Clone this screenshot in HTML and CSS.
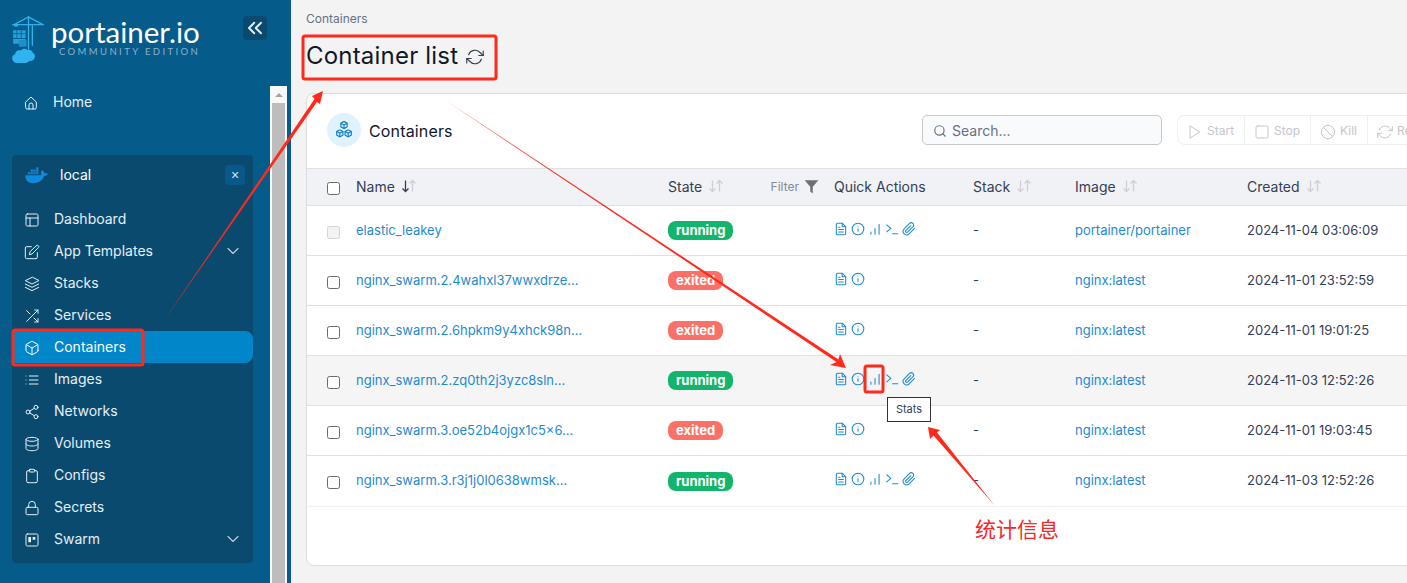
FILE: index.html
```html
<!DOCTYPE html>
<html lang="en">
<head>
  <meta charset="UTF-8" />
  <meta name="viewport" content="width=device-width, initial-scale=1.0"/>
  <title>Container list</title>
  <link rel="stylesheet" href="styles.css">
</head>
<body>

  <svg class="defs" width="0" height="0">
    <symbol id="i-home" viewBox="0 0 24 24"><path d="M4 10.500 12 3l8 7.500V19a2 2 0 0 1-2 2H6a2 2 0 0 1-2-2z"/><path d="M9 21v-6a3 3 0 0 1 6 0v6"/></symbol>
    <symbol id="i-layout" viewBox="0 0 24 24"><rect x="3" y="3" width="18" height="18" rx="2"/><path d="M3 9h18M9 21V9"/></symbol>
    <symbol id="i-edit" viewBox="0 0 24 24"><path d="M11 4H4a2 2 0 0 0-2 2v14a2 2 0 0 0 2 2h14a2 2 0 0 0 2-2v-7"/><path d="M18.500 2.500a2.121 2.121 0 0 1 3 3L12 15l-4 1 1-4z"/></symbol>
    <symbol id="i-layers" viewBox="0 0 24 24"><path d="M12 2 2 7l10 5 10-5z"/><path d="m2 17 10 5 10-5M2 12l10 5 10-5"/></symbol>
    <symbol id="i-shuffle" viewBox="0 0 24 24"><path d="M16 3h5v5M4 20 21 3M21 16v5h-5M15 15l6 6M4 4l5 5"/></symbol>
    <symbol id="i-box" viewBox="0 0 24 24"><path d="M21 16V8a2 2 0 0 0-1-1.730l-7-4a2 2 0 0 0-2 0l-7 4A2 2 0 0 0 3 8v8a2 2 0 0 0 1 1.730l7 4a2 2 0 0 0 2 0l7-4A2 2 0 0 0 21 16z"/><path d="M3.270 6.960 12 12.010l8.730-5.050M12 22.080V12"/></symbol>
    <symbol id="i-list" viewBox="0 0 24 24"><path d="M8 6h13M8 12h13M8 18h13M3 6h.01M3 12h.01M3 18h.01"/></symbol>
    <symbol id="i-share" viewBox="0 0 24 24"><circle cx="18" cy="5" r="3"/><circle cx="6" cy="12" r="3"/><circle cx="18" cy="19" r="3"/><path d="m8.590 13.510 6.830 3.980M15.410 6.510l-6.820 3.980"/></symbol>
    <symbol id="i-db" viewBox="0 0 24 24"><ellipse cx="12" cy="5" rx="9" ry="3"/><path d="M21 12c0 1.660-4 3-9 3s-9-1.340-9-3"/><path d="M3 5v14c0 1.660 4 3 9 3s9-1.340 9-3V5"/></symbol>
    <symbol id="i-clipboard" viewBox="0 0 24 24"><path d="M16 4h2a2 2 0 0 1 2 2v14a2 2 0 0 1-2 2H6a2 2 0 0 1-2-2V6a2 2 0 0 1 2-2h2"/><rect x="8" y="2" width="8" height="4" rx="1"/></symbol>
    <symbol id="i-lock" viewBox="0 0 24 24"><rect x="3" y="11" width="18" height="11" rx="2"/><path d="M7 11V7a5 5 0 0 1 10 0v4"/></symbol>
    <symbol id="i-trello" viewBox="0 0 24 24"><rect x="3" y="3" width="18" height="18" rx="2"/><path d="M8.500 7.500v8M15 7.500v4" class="thick"/></symbol>
    <symbol id="i-chevron" viewBox="0 0 24 24"><path d="m6 9 6 6 6-6"/></symbol>
    <symbol id="i-file" viewBox="0 0 24 24"><path d="M14 2H6a2 2 0 0 0-2 2v16a2 2 0 0 0 2 2h12a2 2 0 0 0 2-2V8z"/><path d="M14 2v6h6M16 13H8M16 17H8M10 9H8"/></symbol>
    <symbol id="i-info" viewBox="0 0 24 24"><circle cx="12" cy="12" r="10"/><path d="M12 16v-4.500M12 8h.01"/></symbol>
    <symbol id="i-stats" viewBox="0 0 24 24"><path d="M19 21V4M12 21V11M5 21v-4"/></symbol>
    <symbol id="i-term" viewBox="0 0 24 24"><path d="m3 17 7-6-7-6M13 20h9"/></symbol>
    <symbol id="i-clip" viewBox="0 0 24 24"><path d="m21.440 11.050-9.190 9.190a6 6 0 0 1-8.490-8.490l9.190-9.190a4 4 0 0 1 5.660 5.660l-9.200 9.190a2 2 0 0 1-2.830-2.830l8.490-8.480"/></symbol>
    <symbol id="i-refresh" viewBox="0 0 24 24"><path d="M23 4v6h-6M1 20v-6h6"/><path d="M3.510 9a9 9 0 0 1 14.850-3.360L23 10M1 14l4.640 4.360A9 9 0 0 0 20.490 15"/></symbol>
    <symbol id="i-search" viewBox="0 0 24 24"><circle cx="11" cy="11" r="8"/><path d="m21 21-4.350-4.350"/></symbol>
    <symbol id="i-play" viewBox="0 0 24 24"><path d="M5 3l14 9-14 9z"/></symbol>
    <symbol id="i-square" viewBox="0 0 24 24"><rect x="3" y="3" width="18" height="18" rx="2"/></symbol>
    <symbol id="i-ban" viewBox="0 0 24 24"><circle cx="12" cy="12" r="10"/><path d="m4.930 4.930 14.140 14.140"/></symbol>
    <symbol id="i-sort" viewBox="0 0 16 16"><path d="M4.500 2.500v11M1.500 10.500l3 3 3-3" class="down"/><path d="M11.500 13.500v-11M8.500 5.500l3-3 3 3"/></symbol>
  </svg>

  <aside class="sidebar">
    <div class="side-col">
      <div class="brand">
        <svg class="brand-logo" viewBox="0 0 36 50" fill="none">
          <path d="M1 10h33M18 1v35M3 10 18 2l15 8M22 10v22" stroke="#2fb1ee" stroke-width="1.400"/>
          <path d="M3 10h4v2H3z" fill="#2fb1ee"/>
          <path d="M2 16h13v8H2zM2 25h13v5H2z" fill="#25a0dd"/>
          <path d="M2 19.500h13M6 16v8M10.500 16v8" stroke="#055b8a" stroke-width=".8"/>
          <path d="M8 26h8v7H8z" fill="#1d8fca"/>
          <path d="M7 50c-4 0-6-2.500-6-5 0-2 1-3.500 3-4 0-3 3-5 6-4 1.500-2 5-2.500 7-.5 2-.8 5 .5 5.500 3 2 .8 2.500 2.500 2.200 4-.4 3-3 5-6 4.500-1.500 2-6 3-8 2z" fill="#2db4f1"/>
        </svg>
        <div class="brand-text">
          <div class="brand-name">portainer.io</div>
          <div class="brand-sub">COMMUNITY EDITION</div>
        </div>
        <button class="collapse">
          <svg class="icon" viewBox="0 0 24 24"><path d="m11 5-7 7 7 7M20 5l-7 7 7 7"/></svg>
        </button>
      </div>

      <a class="nav-item home"><svg class="icon"><use href="#i-home"/></svg>Home</a>

      <div class="env">
        <div class="env-head">
          <svg class="whale" viewBox="0 0 24 17">
            <path d="M23.700 6.500c-.7-.5-2.200-.6-3.400-.3-.2-1.200-.9-2.200-2-3l-.6-.4-.4.6c-.5.8-.7 2-.6 3 0 .4.200.9.400 1.300-.9.500-2.300.6-2.600.6H.4c-.2 1.500 0 3.100.7 4.500C2 14.500 3.700 16.500 8 16.500c5.500 0 10-2.300 12.100-7.500 1.300 0 2.700-.4 3.300-1.700z" fill="#1389de"/>
            <path d="M3 5h2.300v2.300H3zM5.900 5h2.300v2.300H5.900zM8.800 5h2.300v2.300H8.800zM11.700 5H14v2.300h-2.300zM5.900 2.300h2.300v2.300H5.900zM8.800 2.300h2.300v2.300H8.800zM11.700 2.300H14v2.300h-2.300zM11.700-.2H14v2.200h-2.300z" fill="#1389de"/>
          </svg>
          <span class="env-name">local</span>
          <button class="env-close">×</button>
        </div>
        <a class="nav-item"><svg class="icon"><use href="#i-layout"/></svg>Dashboard</a>
        <a class="nav-item"><svg class="icon"><use href="#i-edit"/></svg>App Templates<svg class="icon chev"><use href="#i-chevron"/></svg></a>
        <a class="nav-item"><svg class="icon"><use href="#i-layers"/></svg>Stacks</a>
        <a class="nav-item"><svg class="icon"><use href="#i-shuffle"/></svg>Services</a>
        <a class="nav-item active"><svg class="icon"><use href="#i-box"/></svg>Containers</a>
        <a class="nav-item"><svg class="icon"><use href="#i-list"/></svg>Images</a>
        <a class="nav-item"><svg class="icon"><use href="#i-share"/></svg>Networks</a>
        <a class="nav-item"><svg class="icon"><use href="#i-db"/></svg>Volumes</a>
        <a class="nav-item"><svg class="icon"><use href="#i-clipboard"/></svg>Configs</a>
        <a class="nav-item"><svg class="icon"><use href="#i-lock"/></svg>Secrets</a>
        <a class="nav-item"><svg class="icon"><use href="#i-trello"/></svg>Swarm<svg class="icon chev"><use href="#i-chevron"/></svg></a>
      </div>
    </div>

    <div class="scrollbar">
      <div class="scroll-up"></div>
      <div class="scroll-thumb"></div>
    </div>
  </aside>

  <main class="content">
    <div class="crumb">Containers</div>
    <h1 class="page-title">Container list <svg class="icon"><use href="#i-refresh"/></svg></h1>

    <section class="card">
      <div class="card-head">
        <div class="card-icon">
          <svg viewBox="0 0 24 24" class="icon">
            <use href="#i-box" x="7" y="1" width="10" height="10"/>
            <use href="#i-box" x="2" y="11" width="10" height="10"/>
            <use href="#i-box" x="12" y="11" width="10" height="10"/>
          </svg>
        </div>
        <h2 class="card-title">Containers</h2>
        <div class="search"><svg class="icon"><use href="#i-search"/></svg>Search...</div>
        <div class="btn-group">
          <span class="btn b-start"><svg class="icon"><use href="#i-play"/></svg>Start</span>
          <span class="btn b-stop"><svg class="icon"><use href="#i-square"/></svg>Stop</span>
          <span class="btn b-kill"><svg class="icon"><use href="#i-ban"/></svg>Kill</span>
          <span class="btn b-restart"><svg class="icon"><use href="#i-refresh"/></svg>Restart</span>
        </div>
      </div>

      <div class="row row-head">
        <div class="tick"><span class="check"></span></div>
        <div class="th">Name <svg class="sort sorted"><use href="#i-sort"/></svg></div>
        <div class="th th-state">State <svg class="sort"><use href="#i-sort"/></svg>
          <span class="filter">Filter <svg viewBox="0 0 24 24"><path d="M23 2H1l9 10.500V20l4 3V12.500z"/></svg></span>
        </div>
        <div class="th">Quick Actions</div>
        <div class="th">Stack <svg class="sort"><use href="#i-sort"/></svg></div>
        <div class="th">Image <svg class="sort"><use href="#i-sort"/></svg></div>
        <div class="th">Created <svg class="sort"><use href="#i-sort"/></svg></div>
      </div>

      <div class="row">
        <div class="tick"><span class="check off"></span></div>
        <a class="cell link">elastic_leakey</a>
        <div><span class="badge running">running</span></div>
        <div class="actions">
          <svg class="icon"><use href="#i-file"/></svg><svg class="icon"><use href="#i-info"/></svg><svg class="icon"><use href="#i-stats"/></svg><svg class="icon"><use href="#i-term"/></svg><svg class="icon"><use href="#i-clip"/></svg>
        </div>
        <div class="cell">-</div>
        <a class="cell link">portainer/portainer</a>
        <div class="cell">2024-11-04 03:06:09</div>
      </div>

      <div class="row">
        <div class="tick"><span class="check"></span></div>
        <a class="cell link">nginx_swarm.2.4wahxl37wwxdrze...</a>
        <div><span class="badge exited">exited</span></div>
        <div class="actions">
          <svg class="icon"><use href="#i-file"/></svg><svg class="icon"><use href="#i-info"/></svg>
        </div>
        <div class="cell">-</div>
        <a class="cell link">nginx:latest</a>
        <div class="cell">2024-11-01 23:52:59</div>
      </div>

      <div class="row">
        <div class="tick"><span class="check"></span></div>
        <a class="cell link">nginx_swarm.2.6hpkm9y4xhck98n...</a>
        <div><span class="badge exited">exited</span></div>
        <div class="actions">
          <svg class="icon"><use href="#i-file"/></svg><svg class="icon"><use href="#i-info"/></svg>
        </div>
        <div class="cell">-</div>
        <a class="cell link">nginx:latest</a>
        <div class="cell">2024-11-01 19:01:25</div>
      </div>

      <div class="row hovered">
        <div class="tick"><span class="check"></span></div>
        <a class="cell link">nginx_swarm.2.zq0th2j3yzc8sln...</a>
        <div><span class="badge running">running</span></div>
        <div class="actions">
          <svg class="icon"><use href="#i-file"/></svg><svg class="icon"><use href="#i-info"/></svg><svg class="icon"><use href="#i-stats"/></svg><svg class="icon"><use href="#i-term"/></svg><svg class="icon"><use href="#i-clip"/></svg>
          <span class="tooltip">Stats</span>
        </div>
        <div class="cell">-</div>
        <a class="cell link">nginx:latest</a>
        <div class="cell">2024-11-03 12:52:26</div>
      </div>

      <div class="row">
        <div class="tick"><span class="check"></span></div>
        <a class="cell link">nginx_swarm.3.oe52b4ojgx1c5×6...</a>
        <div><span class="badge exited">exited</span></div>
        <div class="actions">
          <svg class="icon"><use href="#i-file"/></svg><svg class="icon"><use href="#i-info"/></svg>
        </div>
        <div class="cell">-</div>
        <a class="cell link">nginx:latest</a>
        <div class="cell">2024-11-01 19:03:45</div>
      </div>

      <div class="row last">
        <div class="tick"><span class="check"></span></div>
        <a class="cell link">nginx_swarm.3.r3j1j0l0638wmsk...</a>
        <div><span class="badge running">running</span></div>
        <div class="actions">
          <svg class="icon"><use href="#i-file"/></svg><svg class="icon"><use href="#i-info"/></svg><svg class="icon"><use href="#i-stats"/></svg><svg class="icon"><use href="#i-term"/></svg><svg class="icon"><use href="#i-clip"/></svg>
        </div>
        <div class="cell">-</div>
        <a class="cell link">nginx:latest</a>
        <div class="cell">2024-11-03 12:52:26</div>
      </div>
    </section>
  </main>

  <!-- red markup drawn on top of the screenshot -->
  <svg class="markup" width="1407" height="583" viewBox="0 0 1407 583">
    <rect x="303" y="36" width="193" height="43" rx="2"/>
    <rect x="13" y="330" width="130" height="35" rx="2"/>
    <rect x="865" y="366" width="18" height="26" rx="2"/>
    <polygon points="163,322 317,102 320,104 323,91 312,96 314.500,99"/>
    <polygon points="445,100 838.500,359.500 840,354 846,368 830,365 836.500,362"/>
    <polygon points="995,506 937,432.500 940,430 928,427 930,439 933.500,435.500"/>
  </svg>
  <span class="note">统计信息</span>

</body>
</html>
```

FILE: styles.css
```css
:root {
  --sidebar-bg: #055b8a;
  --panel-bg: #0a4a6e;
  --active-bg: #0086c9;
  --nav-text: #e4eff7;
  --page-bg: #f3f3f3;
  --line: #dfe0e3;
  --link: #1f8ad0;
  --text: #344054;
  --red: #ff2a1c;
}

* {
  box-sizing: border-box;
  margin: 0;
  padding: 0;
}

html, body {
  height: 583px;
  overflow: hidden;
}

body {
  position: relative;
  display: flex;
  background-color: var(--page-bg);
  color: var(--text);
  font-family: Inter, "Liberation Sans", sans-serif;
  font-size: 13px;
}

.defs {
  position: absolute;
}

.icon {
  width: 16px;
  height: 16px;
  fill: none;
  stroke: currentColor;
  stroke-width: 2;
  stroke-linecap: round;
  stroke-linejoin: round;
  flex-shrink: 0;
}

/* sidebar */
.sidebar {
  display: flex;
  flex-shrink: 0;
  width: 291px;
  height: 583px;
  padding-right: 4px;
  background-color: var(--sidebar-bg);
  color: var(--nav-text);
}

.side-col {
  width: 270px;
}

.brand {
  display: flex;
  height: 86px;
  padding: 15px 3px 0 11px;
}

.brand-logo {
  width: 35px;
  height: 48px;
}

.brand-text {
  margin-left: 5px;
  padding-top: 2px;
  width: 192px;
}

.brand-name {
  font-family: Lato, sans-serif;
  font-size: 29.500px;
  line-height: 29px;
  color: #fff;
}

.brand-sub {
  margin-left: 8px;
  font-family: Lato, sans-serif;
  font-size: 9.500px;
  line-height: 11px;
  letter-spacing: 2.400px;
  color: #8fb0c6;
  white-space: nowrap;
}

.collapse {
  display: flex;
  align-items: center;
  justify-content: center;
  width: 24px;
  height: 24px;
  margin: 1px 0 0 0;
  border: none;
  border-radius: 4px;
  background-color: var(--panel-bg);
  color: #e4eff7;
}

.collapse .icon {
  width: 18px;
  height: 18px;
  stroke-width: 2.500;
}

.nav-item {
  display: flex;
  align-items: center;
  height: 32px;
  padding: 0 12px 2px 12px;
  border-radius: 0 8px 8px 0;
  font-size: 14px;
  gap: 14px;
}

.nav-item .icon {
  margin-top: 4px;
  stroke-width: 1.500;
}

.nav-item .chev {
  width: 20px;
  height: 20px;
  margin: 2px -2px 0 auto;
  stroke: #b8cbd8;
  stroke-width: 1.400;
}

.thick {
  stroke-width: 4;
  stroke-linecap: butt;
}

.nav-item.home {
  padding-left: 23px;
}

.nav-item.active {
  background-color: var(--active-bg);
  color: #fff;
}

.env {
  width: 241px;
  height: 408px;
  margin: 37px 0 0 12px;
  border-radius: 4px;
  background-color: var(--panel-bg);
}

.env-head {
  display: flex;
  align-items: center;
  height: 48px;
  padding: 0 8px 8px 13px;
}

.whale {
  width: 23px;
  height: 17px;
}

.env-name {
  margin: 0 0 2px 12px;
  font-size: 14px;
  color: #fff;
}

.env-close {
  width: 20px;
  height: 20px;
  margin-left: auto;
  border: none;
  border-radius: 4px;
  background-color: #08598a;
  color: #d5e4ef;
  font-size: 14px;
  line-height: 20px;
}

.scrollbar {
  display: flex;
  flex-direction: column;
  width: 17px;
  margin-top: 86px;
  background-color: #f8f8f8;
}

.scroll-up {
  position: relative;
  height: 17px;
}

.scroll-up::after {
  content: "";
  position: absolute;
  left: 5px;
  top: 7px;
  border: 4px solid transparent;
  border-top: none;
  border-bottom: 4px solid #a3a3a3;
}

.scroll-thumb {
  flex: 1;
  margin: 0 2px;
  background-color: #bdbdbd;
}

/* main column */
.content {
  flex: 1;
  min-width: 0;
  padding: 12px 0 0 15px;
}

.crumb {
  font-size: 12px;
  line-height: 14px;
  color: #667085;
}

.page-title {
  display: flex;
  align-items: center;
  gap: 8px;
  height: 32px;
  margin-top: 13px;
  color: #101828;
  font-size: 24px;
  font-weight: 400;
  letter-spacing: .2px;
}

.page-title .icon {
  width: 18px;
  height: 18px;
  stroke-width: 1.500;
  color: #344054;
  margin-top: 3px;
}

.card {
  width: 1300px;
  height: 473px;
  margin-top: 22px;
  border: 1px solid #dcdde2;
  border-radius: 8px;
  background-color: #fff;
}

.card-head {
  display: flex;
  align-items: center;
  height: 74px;
  padding: 0 0 2px 20px;
}

.card-icon {
  display: flex;
  align-items: center;
  justify-content: center;
  width: 34px;
  height: 34px;
  border-radius: 50%;
  background-color: #e0f2fe;
  color: #0e7fc4;
}

.card-icon .icon {
  width: 20px;
  height: 20px;
  stroke-width: 3.400;
}

.card-title {
  width: 553px;
  margin: 2px 0 0 8px;
  color: #101828;
  font-size: 16px;
  font-weight: 400;
  letter-spacing: .15px;
}

.search {
  display: flex;
  align-items: center;
  gap: 5px;
  width: 240px;
  height: 30px;
  padding: 1px 0 0 10px;
  border: 1px solid #c6c8cc;
  border-radius: 5px;
  background-color: #f9fafb;
  color: #667085;
  font-size: 14px;
}

.search .icon {
  width: 14px;
  height: 14px;
  stroke-width: 2;
}

.btn-group {
  display: flex;
  height: 30px;
  margin-left: 15px;
  border: 1px solid #eeeff1;
  border-radius: 8px;
  color: #c4c6cb;
  font-size: 12px;
}

.btn {
  display: flex;
  align-items: center;
  gap: 4px;
  padding-left: 9px;
  border-right: 1px solid #eeeff1;
}

.btn .icon {
  stroke-width: 1.500;
  margin-top: 4px;
}

.b-start { width: 67px; }
.b-stop { width: 66px; }
.b-kill { width: 57px; }
.b-restart { width: 90px; }

/* table rows */
.row {
  display: grid;
  grid-template-columns: 49px 312px 166px 139px 102px 172px 220px;
  align-items: center;
  height: 50px;
  border-bottom: 1px solid var(--line);
}

.tick {
  display: flex;
  padding-left: 20px;
}

.cell {
  padding-bottom: 2px;
}

.row.last {
  border-bottom-color: #f1f1f3;
  height: 51px;
}

.row.hovered {
  background-color: #f5f5f5;
}

.row-head {
  height: 38px;
  border-top: 1px solid var(--line);
  background-color: #f1f2f6;
}

.th {
  display: flex;
  align-items: center;
  gap: 6px;
  padding-bottom: 2px;
  font-size: 14px;
  color: #344054;
}

.th-state {
  padding-right: 15px;
}

.sort {
  width: 16px;
  height: 16px;
  fill: none;
  stroke: #ccd0d6;
  stroke-width: 1.300;
}

.down {
  stroke: var(--sort-down, #ccd0d6);
}

.sorted {
  --sort-down: #344054;
}

.filter {
  display: flex;
  align-items: center;
  gap: 5px;
  margin-left: auto;
  color: #858a93;
  font-size: 12px;
}

.filter svg {
  width: 15px;
  height: 15px;
  fill: #6b6f76;
}

.check {
  width: 13px;
  height: 13px;
  margin-top: 3px;
  border: 1px solid #6b6b6b;
  border-radius: 2.500px;
  background-color: #fff;
}

.check.off {
  border-color: #d4d4d4;
  background-color: #f3f3f3;
}

.link {
  color: var(--link);
}

.badge {
  display: inline-block;
  height: 19px;
  padding: 0 8px;
  border-radius: 8px;
  color: #fff;
  font-size: 13px;
  font-weight: 700;
  line-height: 19px;
}

.running {
  background-color: #13b56c;
}

.exited {
  background-color: #fb7067;
}

.actions {
  position: relative;
  display: flex;
  gap: 3px;
  margin-top: -4px;
  color: #1f8ad0;
}

.actions .icon {
  width: 14px;
  height: 14px;
  stroke-width: 1.800;
}

.tooltip {
  position: absolute;
  left: 53px;
  top: 25px;
  width: 44px;
  height: 25px;
  border: 1px solid #333;
  background-color: #fff;
  color: #344054;
  font-size: 11px;
  line-height: 23px;
  text-align: center;
  z-index: 2;
}

/* annotations */
.markup {
  position: absolute;
  left: 0;
  top: 0;
  z-index: 5;
  pointer-events: none;
}

.markup rect {
  fill: none;
  stroke: var(--red);
  stroke-width: 3;
}

.markup polygon {
  fill: var(--red);
}

.note {
  position: absolute;
  left: 975px;
  top: 513px;
  z-index: 5;
  color: #f5282a;
  font-family: "Noto Sans CJK SC", sans-serif;
  font-size: 21px;
  line-height: 30px;
}
```
